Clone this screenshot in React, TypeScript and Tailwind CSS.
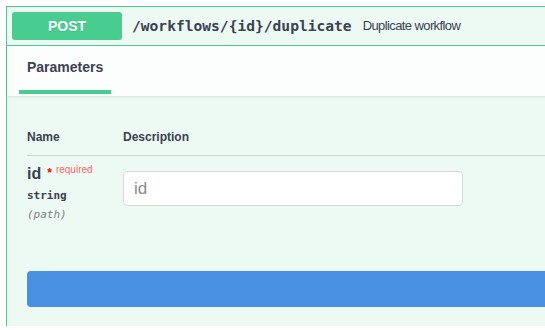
export default function App() {
  return (
    <div className="w-[545px] h-[330px] overflow-hidden bg-white pt-[6px] pl-[6px] font-['Liberation_Sans',Arial,sans-serif] text-[#3b4151]">
      <div className="w-[580px] h-[320px] border-l border-t border-r border-[#49cc90] bg-[#edfaf4]">
        {/* summary */}
        <div className="flex items-center h-[39px] px-[5px] border-b border-[#49cc90]">
          <span className="w-[110px] h-[28px] rounded-[3px] bg-[#49cc90] text-white text-[14px] font-bold flex items-center justify-center [text-shadow:0_1px_0_rgba(0,0,0,0.1)]">
            POST
          </span>
          <span className="ml-[10px] font-['DejaVu_Sans_Mono',monospace] font-bold text-[14.6px]">
            /workflows/&#123;id&#125;/duplicate
          </span>
          <span className="ml-[11px] text-[13px] tracking-[-0.6px]">Duplicate workflow</span>
        </div>

        {/* section header */}
        <div className="h-[50px] bg-white/80 shadow-[0_1px_2px_rgba(0,0,0,0.1)] pl-[12px] flex items-end">
          <div className="h-full flex flex-col justify-end">
            <div className="px-[8px] text-[14px] font-bold leading-[20px] pb-[13px]">Parameters</div>
            <div className="h-[4px] bg-[#49cc90] mb-[2px]" />
          </div>
        </div>

        {/* body */}
        <div className="pt-[33px] pl-[20px]">
          <div className="flex border-b border-[rgba(59,65,81,0.2)] pb-[10px] text-[12px] font-bold leading-[16px]">
            <div className="w-[96px]">Name</div>
            <div>Description</div>
          </div>
          <div className="flex h-[75px]">
            <div className="w-[96px] pt-[8px]">
              <div className="flex items-start leading-[20px]">
                <span className="text-[16px] font-bold">id</span>
                <span className="text-[12px] text-[#ff0000] ml-[6px] relative top-[-1px] font-bold">*</span>
                <span className="text-[10px] text-[#ff6666] ml-[4px] relative top-[-2px] leading-[16px]">required</span>
              </div>
              <div className="font-['DejaVu_Sans_Mono',monospace] text-[11px] font-bold leading-[14px] mt-[5px]">string</div>
              <div className="font-['DejaVu_Sans_Mono',monospace] text-[11px] italic text-[#808080] leading-[14px] mt-[5px]">(path)</div>
            </div>
            <div className="pt-[15px]">
              <input
                type="text"
                placeholder="id"
                className="w-[340px] h-[35px] px-[10px] border border-[#d9d9d9] rounded-[4px] bg-white text-[17px] placeholder:text-[#8a8a8a] font-['Liberation_Sans',Arial,sans-serif] outline-none"
              />
            </div>
          </div>
          <div className="mt-[40px] h-[36px] rounded-[4px] bg-[#4990e2] w-[560px]" />
        </div>
      </div>
    </div>
  );
}
